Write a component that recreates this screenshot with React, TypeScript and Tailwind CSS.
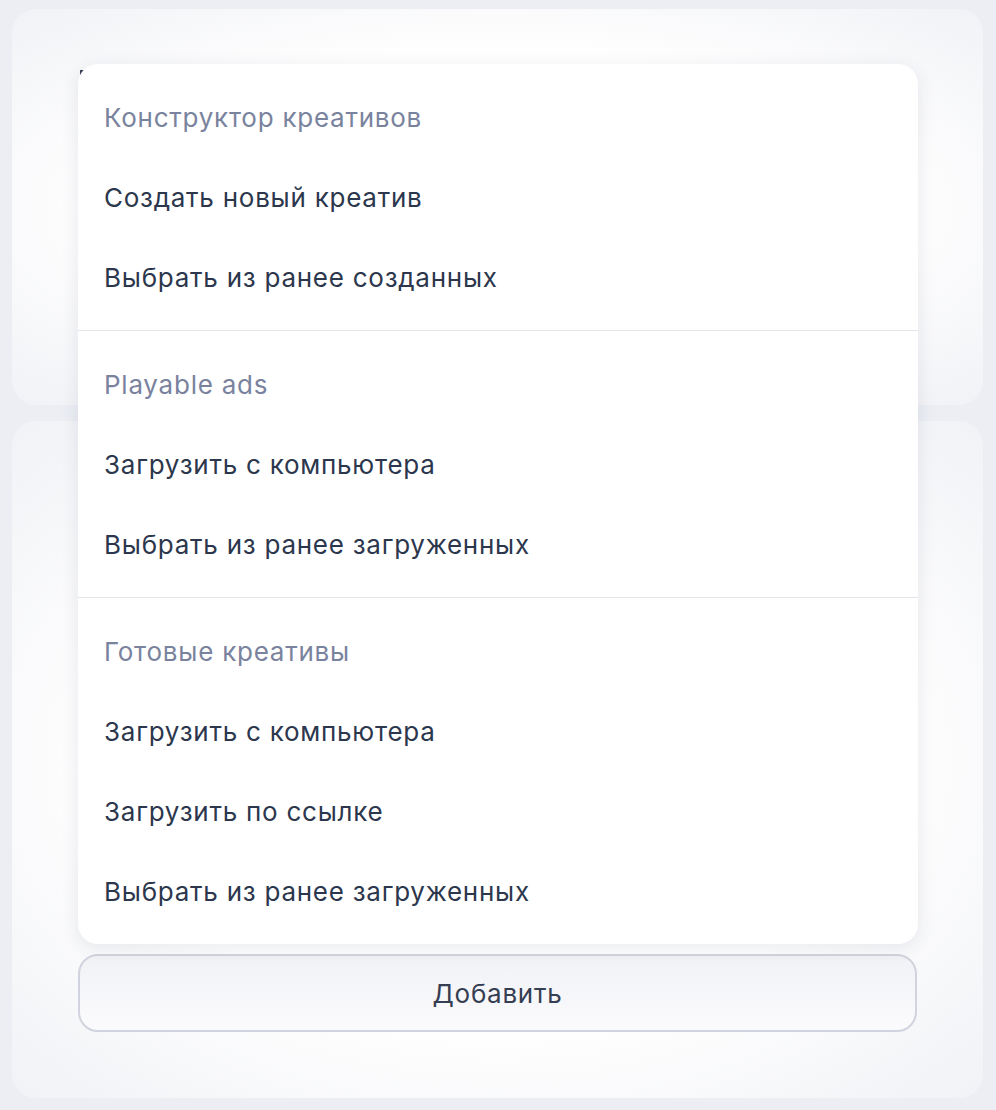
const sections = [
	{
		title: 'Конструктор креативов',
		items: ['Создать новый креатив', 'Выбрать из ранее созданных'],
	},
	{
		title: 'Playable ads',
		items: ['Загрузить с компьютера', 'Выбрать из ранее загруженных'],
	},
	{
		title: 'Готовые креативы',
		items: ['Загрузить с компьютера', 'Загрузить по ссылке', 'Выбрать из ранее загруженных'],
	},
];

const cardBg =
	'bg-[radial-gradient(ellipse_at_center,#ffffff_55%,#f1f2f6_100%)]';

const App = () => {
	return (
		<div
			className="relative w-[996px] h-[1110px] bg-[#eceef4] pt-[9px] pl-[12px] pr-[13px] flex flex-col gap-[16px]"
			style={{ fontFamily: 'Inter, "Noto Sans", sans-serif' }}
		>
			<div className={`relative h-[396px] rounded-[24px] ${cardBg}`}>
				{/* something peeking out under the menu corner */}
				<div className="absolute left-[68px] top-[61px] w-[10px] h-[10px] bg-[#3a4358]"></div>
			</div>

			<div className={`h-[677px] rounded-[24px] ${cardBg} flex flex-col justify-end px-[66px] pb-[66px]`}>
				<button className="h-[78px] w-full rounded-[20px] border-2 border-[#d1d4de] bg-gradient-to-b from-[#f1f2f6] to-[#fbfbfd] text-[26px] tracking-[0.75px] text-[#353e52]">
					Добавить
				</button>
			</div>

			{/* Dropdown */}
			<div className="absolute left-[78px] top-[64px] w-[840px] bg-white rounded-[20px] shadow-[0_4px_18px_rgba(40,50,80,0.10)]">
				{sections.map((section, i) => (
					<div key={section.title} className={i > 0 ? 'border-t border-[#e4e5eb]' : ''}>
						<div className="py-[13px]">
							<div className="h-[80px] flex items-center px-[26px] text-[26px] tracking-[0.75px] text-[#7a839e]">
								{section.title}
							</div>
							{section.items.map((item, j) => (
								<div
									key={j}
									className="h-[80px] flex items-center px-[26px] text-[26px] tracking-[0.75px] text-[#2c374d]"
								>
									{item}
								</div>
							))}
						</div>
					</div>
				))}
			</div>
		</div>
	);
};

export default App;
